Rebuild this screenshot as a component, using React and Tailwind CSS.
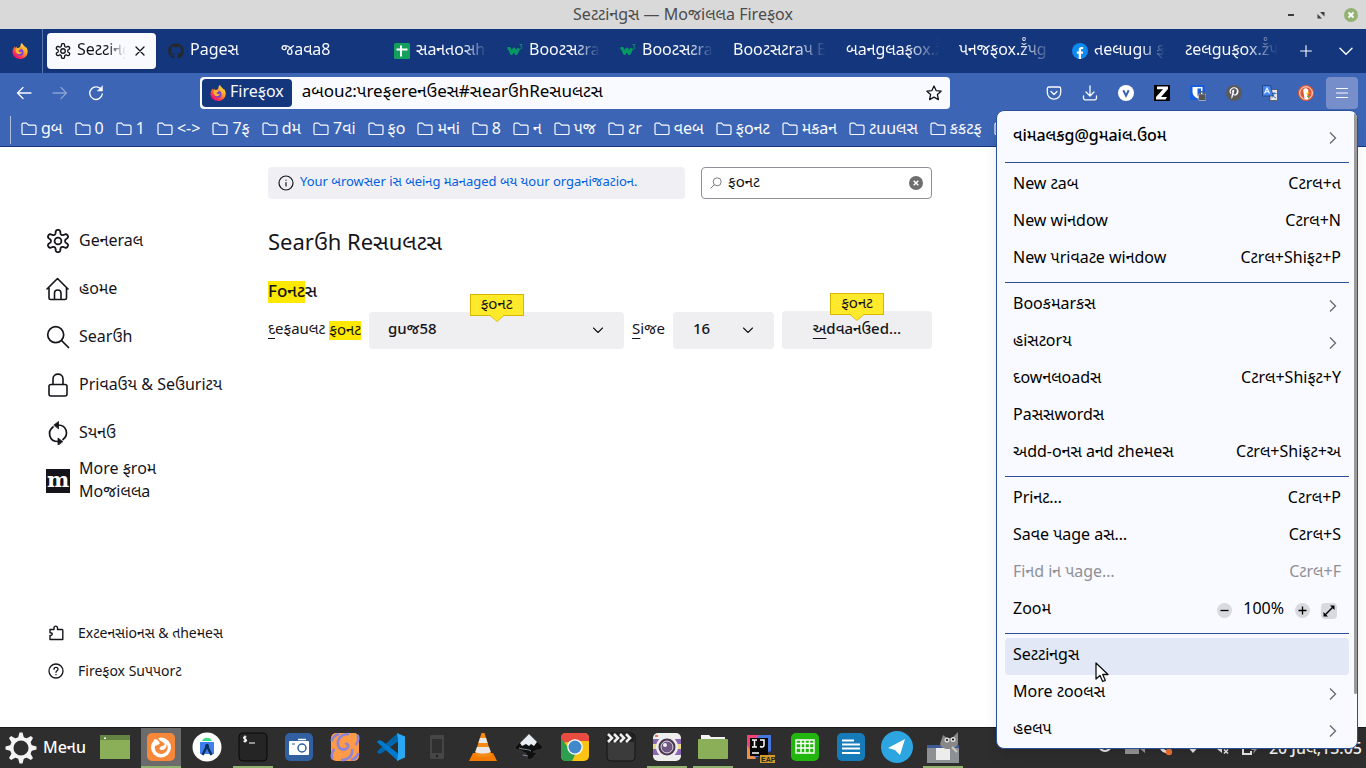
import React from "react";
import { FaGithub, FaFacebookF, FaPinterestP } from "react-icons/fa";

const line = { fill: "none", stroke: "currentColor", strokeLinecap: "round", strokeLinejoin: "round" };

const gearOutline = Array.from({ length: 144 }, (_, i) => {
  const t = (i / 144) * 2 * Math.PI;
  const r = 9.1 + 2.1 * Math.tanh(1.8 * Math.cos(6 * t));
  return `${i ? "L" : "M"}${(12 + r * Math.sin(t)).toFixed(2)} ${(12 - r * Math.cos(t)).toFixed(2)}`;
}).join("") + "z";

function Gear({ className, width }) {
  return (
    <svg viewBox="0 0 24 24" className={className} {...line} strokeWidth={width}>
      <path d={gearOutline} />
      <circle cx="12" cy="12" r="3.400" />
    </svg>
  );
}

function FirefoxLogo({ className, id }) {
  return (
    <svg viewBox="0 0 32 32" className={className}>
      <defs>
        <linearGradient id={id} x1="0.85" y1="0.1" x2="0.2" y2="0.95">
          <stop offset="0" stopColor="#ffe24a" />
          <stop offset="0.4" stopColor="#ff9a27" />
          <stop offset="0.75" stopColor="#ff3750" />
          <stop offset="1" stopColor="#eb0878" />
        </linearGradient>
      </defs>
      <path fill={`url(#${id})`} d="M20 0c1 4 5 5 7 9l1-1c3 4 4 8 3 12-1 7-7 12-15 12S1 26 1 18c0-5 2-8 4-11l1 3 3-3c0 2 1 3 3 3 3-1 5-2 5-5 0-2 1-4 3-5z" />
      <circle cx="16" cy="18.500" r="7" fill="#7a43d6" />
      <path fill="#ffb52b" d="M8 11c4-2 6 0 9 1 0 2-4 3-4 4 1 3 5 3 7 1-1 5-6 7-10 4-3-3-4-6-2-10z" />
    </svg>
  );
}

function Folder() {
  return (
    <svg viewBox="0 0 16 16" className="mt-0.5 size-4 shrink-0" {...line} strokeWidth="1.200">
      <path d="M1 3.500c0-.8.5-1.300 1.300-1.300h3.200l2 2h6c.9 0 1.500.6 1.500 1.400v6.600c0 .8-.6 1.300-1.500 1.300H2.300c-.8 0-1.300-.5-1.300-1.300z" />
    </svg>
  );
}

function ChevronRight() {
  return (
    <svg viewBox="0 0 16 16" className="mt-1.5 size-4" fill="none" stroke="#6c6c74" strokeWidth="1.400">
      <path d="M5 2.500l5.500 5.500L5 13.500" />
    </svg>
  );
}

function ChevronDown({ className }) {
  return (
    <svg viewBox="0 0 12 12" className={className} {...line} strokeWidth="1.100">
      <path d="M1.500 4L6 8.500 10.500 4" />
    </svg>
  );
}

function SheetsIcon() {
  return (
    <svg viewBox="0 0 16 16" className="size-4 shrink-0">
      <rect width="16" height="16" rx="1.500" fill="#12a05c" />
      <path d="M2.500 6.500h11M7 2.500v11" stroke="#fff" strokeWidth="2" />
    </svg>
  );
}

function W3Icon() {
  return (
    <svg viewBox="0 0 16 16" className="size-4 shrink-0" fill="none" stroke="#059862">
      <path d="M.5 5.500h2l2 5 2.500-4.500 2.200 4.500 2.500-5" strokeWidth="3" strokeLinejoin="round" />
      <path d="M12.500 1.500H15L13.500 3.500c2 0 2 2.500 0 2.500h-1" strokeWidth="0.900" />
    </svg>
  );
}

function FacebookIcon() {
  return (
    <span className="flex size-4 shrink-0 items-end justify-center rounded-full bg-[#0d8bf0] text-white">
      <FaFacebookF className="size-3" />
    </span>
  );
}

const tabs = [
  { icon: <FaGithub className="size-4 shrink-0 text-[#24292e]" />, text: "Pageસ" },
  { text: "જaવa8" },
  { icon: <SheetsIcon />, text: "સaનતoસh_" },
  { icon: <W3Icon />, text: "Booટસટra" },
  { icon: <W3Icon />, text: "Booટસટra" },
  { text: "Booટસટraપ E" },
  { text: "બaનgલaફox.ž̊" },
  { text: "પનજફox.ž̊પg" },
  { icon: <FacebookIcon />, text: "તeલugu ફ" },
  { text: "ટeલguફox.ž̊પ" },
];

const bookmarks = ["gબ", "0", "1", "<->", "7ફ", "dમ", "7વi", "ફo", "મનi", "8", "ન", "પજ", "ટr", "વeબ", "ફoનટ", "મકaન", "ટuuલસ", "કકટફ", ""];

function TitleBar() {
  return (
    <header className="grid h-[29px] grid-cols-[1fr_auto_1fr] items-center bg-[#d9d9d9] text-[#4c4c4c]">
      <span />
      <h1 className="pb-0.5">Seટટiનgસ — Moજiલલa Fireફox</h1>
      <div className="flex justify-end gap-4 pr-2">
        <button aria-label="Minimize" className="flex size-3.5 items-center justify-center"><span className="h-0.5 w-1.5 bg-[#3c3c3c]" /></button>
        <button aria-label="Restore" className="size-3.5">
          <svg viewBox="0 0 14 14" className="size-3.5" fill="#3c3c3c"><path d="M6 4h4.500v4.500zM3.500 6v4.500H8z" /></svg>
        </button>
        <button aria-label="Close window" className="size-3.5 rounded-full bg-[#92b372]">
          <svg viewBox="0 0 14 14" className="size-3.5" stroke="#fff" strokeWidth="2"><path d="M4.500 4.500l5 5M9.500 4.500l-5 5" /></svg>
        </button>
      </div>
    </header>
  );
}

function TabStrip() {
  return (
    <div className="flex h-11 items-center bg-[#14367c] text-[#f9faff]">
      <button aria-label="Firefox view" className="flex h-full w-[43px] shrink-0 items-center border-r border-[#5b74a9] pl-3"><FirefoxLogo className="size-4" id="fxtab" /></button>
      <div className="grid min-w-0 flex-1 grid-cols-11">
        <div className="min-w-0 pl-1">
          <button className="flex h-9 w-full items-center gap-1.5 rounded bg-[#f9faff] px-2 text-[#15141a] shadow">
            <Gear className="size-4 shrink-0" width={2} />
            <span className="min-w-0 flex-1 overflow-hidden pb-1 text-left whitespace-nowrap [mask-image:linear-gradient(to_right,black_60%,transparent)]">Seટટiનgસ</span>
            <svg viewBox="0 0 16 16" className="size-4 shrink-0" {...line} strokeWidth="1.300"><path d="M4 4l8 8M12 4l-8 8" /></svg>
          </button>
        </div>
        {tabs.map((t, i) => (
          <button key={i} className="flex h-9 min-w-0 items-center gap-1.5 pr-2 pl-3">
            {t.icon}
            <span className="min-w-0 flex-1 overflow-hidden pb-1 text-left whitespace-nowrap [mask-image:linear-gradient(to_right,black_65%,transparent)]">{t.text}</span>
          </button>
        ))}
      </div>
      <button aria-label="New tab" className="flex w-10 shrink-0 justify-center">
        <svg viewBox="0 0 12 12" className="size-3" {...line} strokeWidth="1.100"><path d="M6 .6v10.800M.6 6h10.800" /></svg>
      </button>
      <button aria-label="List all tabs" className="flex w-10 shrink-0 justify-center"><ChevronDown className="size-4" /></button>
    </div>
  );
}

function ToolButton({ label, children }) {
  return <button aria-label={label} className="flex w-9 shrink-0 items-center justify-center">{children}</button>;
}

function NavBar() {
  return (
    <div className="flex h-10 items-center px-1.5 text-[#f9faff]">
      <ToolButton label="Back"><svg viewBox="0 0 16 16" className="size-4" {...line} strokeWidth="1.300"><path d="M15 8H1.500M7 2.500L1.500 8 7 13.500" /></svg></ToolButton>
      <ToolButton label="Forward"><svg viewBox="0 0 16 16" className="size-4 opacity-40" {...line} strokeWidth="1.300"><path d="M1 8h13.500M9 2.500L14.500 8 9 13.500" /></svg></ToolButton>
      <ToolButton label="Reload"><svg viewBox="0 0 16 16" className="size-4" {...line} strokeWidth="1.400"><path d="M13.500 5A6.300 6.300 0 1 0 14.300 9" /><path d="M14.500 1v5h-5z" fill="currentColor" strokeWidth="0.500" /></svg></ToolButton>
      <div className="mx-[86px] flex h-8 min-w-0 flex-1 items-center rounded bg-[#f9faff] p-0.5 text-black">
        <span className="flex h-7 items-center gap-1 rounded-sm bg-[#14367c] px-2 text-[#f9faff]"><FirefoxLogo className="size-4" id="fxurl" /><span className="pb-1">Fireફox</span></span>
        <input aria-label="Address" className="h-7 min-w-0 flex-1 bg-transparent px-2.5 pb-1 text-[17px] outline-none" defaultValue="aબouટ:પreફereનઉeસ#સearઉhReસuલટસ" />
        <button aria-label="Bookmark this page" className="px-1.5">
          <svg viewBox="0 0 16 16" className="size-4" {...line} stroke="#15141a" strokeWidth="1.300"><path d="M8 1l2.100 4.600 5 .6-3.700 3.400 1 5L8 12.100 3.600 14.600l1-5L.9 6.200l5-.6z" /></svg>
        </button>
      </div>
      <ToolButton label="Save to Pocket"><svg viewBox="0 0 16 16" className="size-4" {...line} strokeWidth="1.300"><path d="M3 2h10c1 0 1.700.7 1.700 1.700V7.500a6.700 6.700 0 0 1-13.400 0V3.700C1.300 2.700 2 2 3 2zM5 6.500l3 3 3-3" /></svg></ToolButton>
      <ToolButton label="Downloads"><svg viewBox="0 0 16 16" className="size-4" {...line} strokeWidth="1.300"><path d="M8 .8v10M4 7l4 4 4-4M1.500 11v2c0 1 .6 1.800 1.500 1.800h10c.9 0 1.500-.8 1.500-1.800v-2" /></svg></ToolButton>
      <ToolButton label="V extension"><svg viewBox="0 0 16 16" className="size-4"><circle cx="8" cy="8" r="8" fill="#fff" /><path d="M5.300 5.300L8 10.700l2.700-5.400" fill="none" stroke="#3b63b5" strokeWidth="2" /></svg></ToolButton>
      <ToolButton label="Z extension"><svg viewBox="0 0 16 16" className="size-4"><rect width="16" height="16" /><path d="M3 1.500h11v2.500L7 12h6L11.500 14.500H2V12L9 4.200H3z" fill="#fff" /></svg></ToolButton>
      <ToolButton label="Bitwarden"><svg viewBox="0 0 16 16" className="size-4"><rect width="15" height="15" rx="2" fill="#175ddc" /><path d="M2.500 2h10v5c0 3-2 5-5 6.500C4.500 12 2.500 10 2.500 7z" fill="#fff" /><path d="M7.500 3.500h3.500V9L7.500 11.500z" fill="#175ddc" /><rect x="8.500" y="9" width="7.500" height="6.500" rx="1" fill="#555" stroke="#ddd" strokeWidth="0.600" /><path d="M10.300 9.500V8.300c0-2.300 3.800-2.300 3.800 0v1.200" fill="none" stroke="#555" strokeWidth="1.200" /></svg></ToolButton>
      <ToolButton label="Pinterest"><span className="flex size-4 items-center justify-center rounded-full bg-[#5a5a5a]"><FaPinterestP className="size-3" /></span></ToolButton>
      <ToolButton label="Translate"><svg viewBox="0 0 16 16" className="size-4"><rect x="8" y="4.500" width="7.500" height="11" fill="#e8e8e8" stroke="#333" strokeWidth="0.600" /><path d="M9.500 8.500h5M12 7v1.500c0 2-1 3.500-2.500 4.500M10.500 9.500c.5 1.500 2 3 3.500 3.500" stroke="#4472c4" strokeWidth="1" fill="none" /><path d="M.5.5h8l2.500 10.500H.5z" fill="#4285f4" stroke="#1c3768" strokeWidth="0.700" /><path d="M2.500 8.500L5 3l2.500 5.500M3.300 6.800h3.400" stroke="#fff" strokeWidth="1.100" fill="none" /></svg></ToolButton>
      <ToolButton label="DuckDuckGo"><svg viewBox="0 0 16 16" className="size-4"><circle cx="8" cy="8" r="8" fill="#de5833" /><circle cx="8" cy="8" r="6.300" fill="none" stroke="#fff" strokeWidth="0.900" /><path d="M6.500 13.500L5.300 6c-.3-2 1.200-3 2.700-2.800 1.800.3 2.500 1.500 2.300 3.300L9.500 9l.7 5c-1.200.5-2.700.4-3.700-.5z" fill="#fff" /><path d="M8.300 7.500l3-.3v1.300l-3 .3z" fill="#fdd20a" /><path d="M9 10.500l2.500.5v1.700L9 12z" fill="#4cba3c" /></svg></ToolButton>
      <button aria-label="Open application menu" className="mx-0.5 flex size-8 shrink-0 items-center justify-center rounded bg-[#768fca]">
        <svg viewBox="0 0 16 16" className="size-4" {...line} strokeWidth="1.200"><path d="M2.500 3.500h11M2.500 8h11M2.500 12.500h11" /></svg>
      </button>
    </div>
  );
}

function BookmarksBar() {
  return (
    <div className="flex h-[34px] items-center overflow-hidden border-b border-[#14367c] pl-2.5 text-[#f9faff]">
      <span className="mr-2.5 h-7 w-px shrink-0 bg-[#b0bfe0]" />
      <div className="flex gap-3 pb-1">
        {bookmarks.map((b) => (
          <button key={b} aria-label={b || "More bookmarks"} className="flex shrink-0 items-center gap-1 whitespace-nowrap"><Folder />{b}</button>
        ))}
      </div>
    </div>
  );
}

const sections = [
  ["Geનeraલ", <Gear className="size-6" width={1.8} />],
  ["હoમe", <svg viewBox="0 0 24 24" className="size-6" {...line} strokeWidth="1.600"><path d="M1 12L11.500 1.500 22 12M3 11v10c0 1 .7 1.500 1.500 1.500h14.500c.8 0 1.500-.5 1.500-1.500V11M8.500 22v-6c0-4 6.500-4 6.500 0v6" /></svg>],
  ["Searઉh", <svg viewBox="0 0 24 24" className="size-6" {...line} strokeWidth="1.700"><circle cx="9.700" cy="9.700" r="8" /><path d="M15.500 15.500l7 7" /></svg>],
  ["Priવaઉય & Seઉuriટય", <svg viewBox="0 0 24 24" className="size-6" {...line} strokeWidth="1.600"><rect x="3" y="11.500" width="18" height="11.500" rx="2" /><path d="M7 11.500V6c0-6.500 10-6.500 10 0v5.500" /></svg>],
  ["Sયનઉ", <svg viewBox="0 0 24 24" className="size-6" {...line} strokeWidth="1.700"><path d="M12 4c9 0 11 10 5 14.500M12 20.500C3 20.500 1 10.500 7 6" /><path d="M8 4l4.500-3.500v7zM16.500 20.500L12 17v7z" fill="currentColor" strokeWidth="0.800" /></svg>],
  ["More ફroમ Moજiલલa", <span className="flex size-6 items-center justify-center bg-[#15141a] pb-1 font-['DejaVu_Serif',serif] text-[21px] leading-none font-bold text-white">m</span>],
];

function Callout() {
  return (
    <div className="pointer-events-none absolute -top-[18px] left-1/2 flex h-[22px] w-[54px] -translate-x-1/2 items-center justify-center border border-[#d7b600] bg-[#ffe92b] pb-1 text-[15px] font-normal text-[#15141a]">
      ફoનટ
      <svg viewBox="0 0 14 7" className="absolute top-full left-1/2 h-[7px] w-3.5 -translate-x-1/2"><path d="M0 0h14L7 6.500z" fill="#ffe92b" /><path d="M0 .5L7 6.500 14 .5" fill="none" stroke="#d7b600" strokeWidth="0.800" /></svg>
    </div>
  );
}

function SettingsPage() {
  return (
    <div className="flex flex-1 bg-white text-[#15141a]">
      <aside className="flex w-[268px] shrink-0 flex-col pt-[70px] pb-[37px] pl-[46px]">
        <nav>
          {sections.map(([label, icon]) => (
            <a key={label} href="#section" className="flex h-12 w-[190px] items-center gap-[9px] leading-[23px]">
              <span className="shrink-0">{icon}</span>
              <span className={label.startsWith("More") ? "w-24 pb-0.5" : "pb-0.5 whitespace-nowrap"}>{label}</span>
            </a>
          ))}
        </nav>
        <div className="mt-auto text-[14px]">
          <a href="#addons" className="flex h-[38px] items-center gap-3.5 pl-0.5">
            <svg viewBox="0 0 16 16" className="size-4" {...line} strokeWidth="1.400"><path d="M2 14.500v-4c2.500.5 3.500-3 0-2.800V4.500h4V3c0-2.500 3.500-2.500 3.500 0v1.500h4.500c.5 0 .8.300.8.800v9.200z" /></svg>
            <span className="pb-0.5">Exટeનસioનસ & તheમeસ</span>
          </a>
          <a href="#support" className="flex h-[38px] items-center gap-3.5 pl-0.5">
            <svg viewBox="0 0 16 16" className="size-4" {...line} strokeWidth="1.300"><circle cx="8" cy="8" r="7" /><path d="M6 6.300c0-2.700 4-2.700 4 0 0 1.500-2 1.500-2 3M8 11.500v.2" /></svg>
            <span className="pb-0.5">Fireફox Suપપorટ</span>
          </a>
        </div>
      </aside>
      <main className="w-full max-w-[664px] pt-5">
        <div className="flex h-8 gap-4">
          <a href="#policies" className="flex flex-1 items-center gap-1.5 rounded bg-[#f0f0f4] px-2.5 text-[13px] text-[#0061e0]">
            <svg viewBox="0 0 16 16" className="size-4" {...line} stroke="#15141a" strokeWidth="1.200"><circle cx="8" cy="8" r="7" /><path d="M8 7.500v3.500M8 5v.2" /></svg>
            <span className="pb-0.5">Your બrowસer iસ બeiનg મaનaged બય યour orgaનiજaટioન.</span>
          </a>
          <div className="flex w-[231px] items-center gap-1.5 rounded border border-[#8f8f9d] px-2">
            <svg viewBox="0 0 12 12" className="size-3 shrink-0" fill="none" stroke="#7b7b85"><circle cx="7.200" cy="4.800" r="4" /><path d="M4.300 7.700L.7 11.300" /></svg>
            <input aria-label="Find in Settings" className="min-w-0 flex-1 pb-1 text-[15px] outline-none" defaultValue="ફoનટ" />
            <button aria-label="Clear"><svg viewBox="0 0 14 14" className="size-3.5"><circle cx="7" cy="7" r="7" fill="#6e6e6e" /><path d="M4.700 4.700l4.600 4.600M9.300 4.700L4.700 9.300" stroke="#fff" strokeWidth="1.500" /></svg></button>
          </div>
        </div>
        <h2 className="mt-[26px] text-[22px] leading-8">Searઉh Reસuલટસ</h2>
        <h3 className="mt-6 h-[22px] text-[17px] leading-[20px] font-medium"><mark className="inline-block bg-[#ffe900] pb-0.5 text-[#15141a]">Foનટ</mark>સ</h3>
        <div className="mt-2 flex h-[38px] items-end gap-2 text-[15px]">
          <label htmlFor="font" className="flex h-[37px] items-center gap-1 whitespace-nowrap"><span className="pb-1"><span className="underline underline-offset-4">દ</span>eફauલટ</span><mark className="bg-[#ffe900] pb-0.5 leading-[17px] text-[#15141a]">ફoનટ</mark></label>
          <div className="relative flex-1">
            <select id="font" className="h-[37px] w-full appearance-none rounded bg-[#efeff1] px-[19px] pb-1 font-medium"><option>guજ58</option></select>
            <ChevronDown className="pointer-events-none absolute top-3 right-5 size-3" />
            <Callout />
          </div>
          <label htmlFor="size" className="flex h-[37px] items-center"><span className="pb-1"><span className="underline underline-offset-4">S</span>iજe</span></label>
          <div className="relative w-[101px]">
            <select id="size" className="h-[37px] w-full appearance-none rounded bg-[#efeff1] px-5 pb-1 font-medium"><option>16</option></select>
            <ChevronDown className="pointer-events-none absolute top-3 right-5 size-3" />
          </div>
          <div className="relative w-[150px]">
            <button className="h-[38px] w-full rounded bg-[#efeff1] pb-1 font-medium"><span className="underline underline-offset-4">અ</span>dવaનઉed…</button>
            <Callout />
          </div>
        </div>
      </main>
    </div>
  );
}

const menu = [
  [["New ટaબ", "Cટrલ+ત"], ["New wiનdow", "Cટrલ+N"], ["New પriવaટe wiનdow", "Cટrલ+Shiફટ+P"]],
  [["Booકમarકસ"], ["હiસટorય"], ["દowનલoadસ", "Cટrલ+Shiફટ+Y"], ["Paસસwordસ", ""], ["અdd-oનસ aનd ટheમeસ", "Cટrલ+Shiફટ+અ"]],
  [["Priનટ…", "Cટrલ+P"], ["Saવe પage aસ…", "Cટrલ+S"], ["Fiનd iન પage…", "Cટrલ+F"], ["Zooમ", "zoom"]],
  [["Seટટiનgસ", ""], ["More ટooલસ"], ["હeલપ"]],
];

function ZoomControls() {
  return (
    <div className="flex items-center gap-[11px] pr-1">
      <button aria-label="Zoom out" className="mt-1.5 size-[15px] rounded-full bg-[#d9dadf]"><svg viewBox="0 0 15 15" stroke="#000" strokeWidth="1.300"><path d="M3.500 7.500h8" /></svg></button>
      <span>100%</span>
      <button aria-label="Zoom in" className="mt-1.5 size-[15px] rounded-full bg-[#d9dadf]"><svg viewBox="0 0 15 15" stroke="#000" strokeWidth="1.300"><path d="M3.500 7.500h8M7.500 3.500v8" /></svg></button>
      <button aria-label="Full screen" className="mt-1.5 size-4 rounded-sm bg-[#d9dadf]"><svg viewBox="0 0 16 16"><path d="M4.500 11.500l7-7" stroke="#000" strokeWidth="1.500" /><path d="M9 2.500h4.500V7zM2.500 9v4.500H7z" /></svg></button>
    </div>
  );
}

function AppMenu() {
  return (
    <div className="absolute top-[110px] right-2 z-10 h-[639px] w-[362px] overflow-hidden rounded-lg border border-[#2a4f9b] bg-[#f9faff] px-2 pt-[7px] text-black shadow-lg">
      <button className="flex h-10 w-full items-center justify-between px-2 pb-1.5 font-medium">વiમaલકg@gમaiલ.ઉoમ<ChevronRight /></button>
      {menu.map((group, g) => (
        <div key={g}>
          <div className="my-1 h-px bg-[#2a4f9b]" />
          {group.map(([label, keys]) => {
            const row = "flex h-[37px] w-full items-center justify-between rounded px-2 pb-1.5";
            if (keys === "zoom") return <div key={label} className={row}><span>{label}</span><ZoomControls /></div>;
            return (
              <button key={label} disabled={label.startsWith("Fi")} className={`${row} ${label.startsWith("Seટ") ? "bg-[#e2e8f6]" : ""} disabled:text-[#8f9096]`}>
                <span>{label}</span>
                {keys === undefined ? <ChevronRight /> : <span>{keys}</span>}
              </button>
            );
          })}
        </div>
      ))}
      <div className="absolute top-0.5 right-0 h-[581px] w-[3px] rounded bg-[#9a9a9c]" />
      <svg viewBox="0 0 14 22" className="absolute top-[551px] left-[98px] h-[22px] w-3.5"><path d="M1 1v16l4-3.500 2.700 6 2.600-1.200-2.600-5.800H13z" fill="#fff" stroke="#111" strokeWidth="1.300" strokeLinejoin="round" /></svg>
    </div>
  );
}

const tile = "size-8";
const apps = [
  ["Files", false, <svg viewBox="0 0 32 32" className={tile}><path d="M1 4h30v24H1z" fill="#8bae58" /><path d="M1 4h30v5H1z" fill="#648444" /><path d="M5 6.500h2v1.500H5z" fill="#fff" /></svg>],
  ["Firefox", true, <svg viewBox="0 0 32 32" className={tile}><rect x="2" y="2" width="28" height="28" rx="5" fill="#f7883a" /><circle cx="16" cy="16.500" r="10" fill="#fff" /><path d="M9 5c3 0 5 2 5 4l5 3c2 2-1 3-3 3.500-2 1-2 3 0 3.500 3 .5 6-2 5.500-5.500C24 15 23 22 17 23c-5 .5-8-4-7-8z" fill="#f7883a" /><path d="M9.500 8c2 0 3.500 1 5 3.500 1 2-2 2-3.500 3.500L8 13z" fill="#fff" /></svg>],
  ["Android Studio", false, <svg viewBox="0 0 32 32" className={tile}><circle cx="16" cy="16" r="14.500" fill="#fff" /><path d="M9 11h14v12H9z" fill="#3f7ff0" /><path d="M11 10c1-4.500 9-4.500 10 0z" fill="#3ddc84" /><path d="M11.500 24l4.500-9 4.500 9" stroke="#0b3159" strokeWidth="2.500" fill="none" /><circle cx="16" cy="15" r="2" fill="#0b3159" /></svg>],
  ["Terminal", true, <svg viewBox="0 0 32 32" className={tile}><rect x="2" y="2" width="28" height="28" rx="4" fill="#252525" stroke="#090909" /><path d="M9.500 6c-4-1-3 2-1.500 2.200 2.500.5 2 3-1.500 2M8 4.500v7M12 12h6" stroke="#fff" fill="none" strokeWidth="1.200" /></svg>],
  ["Screenshot", false, <svg viewBox="0 0 32 32" className={tile}><rect x="2" y="2" width="28" height="28" rx="5" fill="#315f9f" /><rect x="6" y="10" width="20" height="14" rx="1" fill="#fff" /><path d="M15 8.500h8" stroke="#fff" strokeWidth="1.500" /><path d="M9 13h3" stroke="#315f9f" /><circle cx="19" cy="17" r="4" fill="none" stroke="#315f9f" strokeWidth="1.500" /></svg>],
  ["Swirl", false, <svg viewBox="0 0 32 32" className={tile}><rect x="2" y="2" width="28" height="28" rx="5" fill="#ff9b46" /><g fill="none" stroke="#8e84d8" strokeWidth="2.600"><path d="M20 3c-8 0-12 5-11 11 1 5 8 6 10 2 1-2-1-4-3-3" /><path d="M12 29c8 0 12-5 11-11" /><path d="M2.500 10C4 6 6 4 10 3M29.500 22c-1.500 4-3.500 6-7.500 7M28.500 4c1.500 4 0 8-2 10M3.500 28c-1.500-4 0-8 2-10" /></g></svg>],
  ["VS Code", false, <svg viewBox="0 0 32 32" className={tile}><path d="M23 2L4 18.500 2 21l2 2 3-1L25 9z" fill="#0065a9" /><path d="M23 30L4 13l-2-2 2-2 3 1 18 14z" fill="#007acc" /><path d="M22 2l8 3.500v21L22 30l1-6V8z" fill="#2aa7f2" /></svg>],
  ["Phone", false, <svg viewBox="0 0 32 32" className={tile}><rect x="9" y="4" width="14" height="24" rx="1" fill="#464646" /><path d="M11 8h10v14H11z" fill="#303030" /><circle cx="16" cy="25" r="1.200" fill="#222" /></svg>],
  ["VLC", false, <svg viewBox="0 0 32 32" className={tile}><path d="M6 22h20l4 8H2z" fill="#f47b00" /><path d="M14.500 2h3l7 22c-3 3-14 3-17 0z" fill="#f58a15" /><path d="M13 7h6l1.600 5h-9.200zM10 16h12l1.800 5c-5 2-11 2-15.600 0z" fill="#e8e8e8" /></svg>],
  ["Inkscape", false, <svg viewBox="0 0 32 32" className={tile}><path d="M16 2l13 13c2 2-1 4-5 4l-4 2 5 1-3 2-2 3-4 2-2-3-5-2 5-1-7-4c-4 0-6-2-4-4z" fill="#101010" stroke="#555" strokeWidth="0.400" /><path d="M16 3l8 8-3 4-3-2-2 2-3-2-4 2-2-3z" fill="#e7edf3" /><path d="M6 17c6 2 9 1 12 3M10 24l5 1" stroke="#7c8da2" /></svg>],
  ["Chrome", false, <svg viewBox="0 0 32 32" className={tile}><rect x="2" y="2" width="28" height="28" rx="5" fill="#fbc415" /><path d="M2 12V7c0-3 2-5 5-5h18c3 0 5 2 5 5v3H16z" fill="#e84b3f" /><path d="M2 7l9 12 6 3-4 8H7c-3 0-5-2-5-5z" fill="#2e9f4c" /><circle cx="16" cy="16" r="7.800" fill="#fff" /><circle cx="16" cy="16" r="6.500" fill="#4189cb" /></svg>],
  ["Video", false, <svg viewBox="0 0 32 32" className={tile}><rect x="2" y="2" width="28" height="28" rx="4" fill="#3b3b3b" stroke="#151515" /><path d="M3 3h26v8H3z" fill="#202020" /><path d="M3 3l4 4-4 4M9 3l4 4-4 4M15 3l4 4-4 4M21 3l4 4-4 4" stroke="#eee" strokeWidth="2.600" fill="none" /></svg>],
  ["Camera", true, <svg viewBox="0 0 32 32" className={tile}><rect x="2" y="2" width="28" height="28" rx="5" fill="#eee" /><path d="M2 8h28v16H2z" fill="#8a68b2" /><path d="M2 13h28v5H2z" fill="#eadf87" /><circle cx="16" cy="16" r="11" fill="#eee" /><circle cx="16" cy="16" r="8.500" fill="#493552" /><circle cx="16" cy="16" r="6" fill="#715883" stroke="#ddd" /><circle cx="14" cy="14" r="2" fill="#eee" /><path d="M4 4h3v2H4z" fill="#ee705b" /></svg>],
  ["Folder", true, <svg viewBox="0 0 32 32" className={tile}><path d="M4 4h8l2 2h14v6H4z" fill="#f3f3f3" /><rect x="1" y="8" width="30" height="20" rx="1" fill="#8bae58" /></svg>],
  ["IntelliJ", false, <svg viewBox="0 0 32 32" className={tile}><path d="M4 4h14L10 28H4z" fill="#f04478" /><path d="M16 4h12v16L10 28H4v-5z" fill="#4776dc" /><path d="M4 14v14h9z" fill="#ee8e47" /><path d="M7 7h18v18H7z" fill="#080808" /><path d="M9 9h5M11.500 9v7M9 16h5M17 9h4v5c0 2-2 2.500-4 1.500M9 22h7" stroke="#fff" fill="none" strokeWidth="1.500" /><rect x="17" y="24" width="15" height="8" fill="#d49a2c" /><text x="18" y="30.500" fontSize="7" fontWeight="bold" fill="#222" fontFamily="Liberation Sans">EAP</text></svg>],
  ["Calc", false, <svg viewBox="0 0 32 32" className={tile}><rect x="2" y="2" width="28" height="28" rx="5" fill="#22b60e" /><path d="M7 9h18v13H7zM7 12.500h18M7 17h18M12 9v13M16 9v13M20.500 9v13" fill="none" stroke="#fff" strokeWidth="1.400" /></svg>],
  ["Writer", false, <svg viewBox="0 0 32 32" className={tile}><rect x="2" y="2" width="28" height="28" rx="5" fill="#167bb9" /><path d="M7 9.500h12M7 13.500h18M7 17.500h18M7 22h18" stroke="#fff" strokeWidth="1.800" /></svg>],
  ["Telegram", false, <svg viewBox="0 0 32 32" className={tile}><circle cx="16" cy="16" r="16" fill="#2ca5e0" /><path d="M7 17l17-9-5 16-5-5z" fill="#fff" /></svg>],
  ["GIMP", true, <svg viewBox="0 0 32 32" className={tile}><path d="M0 14h32v18H0z" fill="#8e9193" /><path d="M0 14h32v3H0z" fill="#3e5b98" /><path d="M9 17h14v12H9z" fill="#ececec" /><path d="M13 13l3-9 4 3h5l6-6v11c0 4-5 6-10 6-4 0-7-2-8-5z" fill="#888" /><circle cx="20" cy="9" r="2.500" fill="#ddd" /><circle cx="26" cy="8.500" r="2.500" fill="#ddd" /><circle cx="20" cy="9" r="1" /><circle cx="26" cy="8.500" r="1" /><path d="M25 16l5 5" stroke="#ccc" strokeWidth="2" /></svg>],
];

function Taskbar() {
  return (
    <footer className="flex h-[41px] items-center border-t border-[#1b1b1b] bg-[#2e2e2e] text-white">
      <button className="flex w-[90px] shrink-0 items-center gap-1.5 pl-[5px] font-medium">
        <svg viewBox="0 0 32 32" className="size-8 shrink-0"><circle cx="16" cy="16" r="9.300" fill="none" stroke="#f4f4f4" strokeWidth="3.500" /><g fill="#f4f4f4"><path id="tooth" d="M13 6l1.500-5.500h3L19 6z" /><use href="#tooth" transform="rotate(45 16 16)" /><use href="#tooth" transform="rotate(90 16 16)" /><use href="#tooth" transform="rotate(135 16 16)" /><use href="#tooth" transform="rotate(180 16 16)" /><use href="#tooth" transform="rotate(225 16 16)" /><use href="#tooth" transform="rotate(270 16 16)" /><use href="#tooth" transform="rotate(315 16 16)" /></g></svg>
        <span className="pb-0.5">Meનu</span>
      </button>
      <div className="ml-[5px] flex h-full gap-1.5">
        {apps.map(([name, open, icon]) => (
          <button key={name} aria-label={name} className={`flex w-10 items-center justify-center border-b-2 ${open ? "border-[#8fb36e]" : "border-transparent"} ${name === "Firefox" ? "bg-[#6b6b6b]" : ""}`}>{icon}</button>
        ))}
      </div>
      <div className="ml-auto flex items-center gap-3 pr-1 font-medium whitespace-nowrap">
        <svg viewBox="0 0 16 16" className="size-4" fill="none" stroke="#eee" strokeWidth="2"><circle cx="8" cy="5" r="6" /></svg>
        <svg viewBox="0 0 20 16" className="h-4 w-5" fill="#999"><path d="M0 2h14v12H0zM14 8l6-4v9z" /></svg>
        <svg viewBox="0 0 16 16" className="size-4"><path d="M3 3c0 5 3 9 8 9" stroke="#eee" strokeWidth="3" fill="none" /><circle cx="12" cy="12" r="3.200" fill="#f37435" /></svg>
        <svg viewBox="0 0 16 16" className="size-4" fill="#eee"><path d="M0 4c5-4 11-4 16 0l-8 9z" /></svg>
        <svg viewBox="0 0 16 16" className="size-4"><path d="M1 6h3l5-4v11l-5-4H1z" fill="#eee" /><path d="M11 9.500l4 4M15 9.500l-4 4" stroke="#eee" strokeWidth="1.500" /></svg>
        <svg viewBox="0 0 16 16" className="size-4" fill="none"><path d="M2 2v12h8v-3" stroke="#eee" strokeWidth="2" /><path d="M13 5l-3 5h3l-1 4 4-5h-3z" fill="#999" /></svg>
        <span>20 Juલ,13:05</span>
      </div>
    </footer>
  );
}

export default function App() {
  return (
    <div className="relative flex min-h-screen flex-col overflow-hidden bg-white font-['Noto_Sans','Lohit_Gujarati','Noto_Sans_Gujarati',sans-serif] text-base">
      <TitleBar />
      <TabStrip />
      <div className="bg-[#3d65b5]">
        <NavBar />
        <BookmarksBar />
      </div>
      <SettingsPage />
      <Taskbar />
      <AppMenu />
    </div>
  );
}
